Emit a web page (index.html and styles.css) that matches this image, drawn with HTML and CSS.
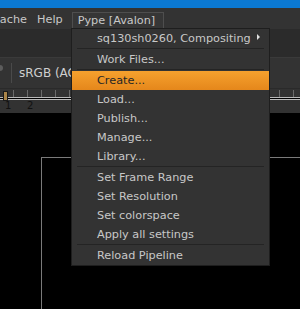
FILE: index.html
```html
<!DOCTYPE html>
<html lang="en">
<head>
  <meta charset="UTF-8">
  <title>Nuke - Pype menu</title>
  <link rel="stylesheet" href="styles.css">
</head>
<body>
<div id="app">
  <div class="titlebar"></div>
  <div class="menubar">
    <span class="menubar-item first">Cache</span>
    <span class="menubar-item">Help</span>
    <span class="menubar-item open">Pype [Avalon]</span>
  </div>
  <div class="panel"></div>
  <div class="toolbar">
    <span class="knob"></span>
    <span class="divider"></span>
    <span class="lut">sRGB (ACES)</span>
  </div>
  <div class="ruler">
    <div class="ticks"><span class="playhead"></span></div>
    <div class="rails"></div>
    <div class="frames"><span>1</span><span>2</span></div>
  </div>
  <div class="viewer">
    <div class="frame"></div>
  </div>

  <div class="menu">
    <div class="menu-item sub">sq130sh0260, Compositing <span class="arrow"></span></div>
    <div class="sep"></div>
    <div class="menu-item">Work Files...</div>
    <div class="sep"></div>
    <div class="menu-item active">Create...</div>
    <div class="menu-item">Load...</div>
    <div class="menu-item">Publish...</div>
    <div class="menu-item">Manage...</div>
    <div class="menu-item">Library...</div>
    <div class="sep"></div>
    <div class="menu-item">Set Frame Range</div>
    <div class="menu-item">Set Resolution</div>
    <div class="menu-item">Set colorspace</div>
    <div class="menu-item">Apply all settings</div>
    <div class="sep"></div>
    <div class="menu-item">Reload Pipeline</div>
  </div>
</div>
</body>
</html>
```

FILE: styles.css
```css
body {
    margin: 0;
    padding: 0;
    background-color: #000;
    font-family: "DejaVu Sans", Verdana, sans-serif;
    font-size: 11.25px;
    color: #c8c8c8;
}

#app {
    position: relative;
    width: 300px;
    height: 309px;
    overflow: hidden;
    display: flex;
    flex-direction: column;
}

#app > div {
    flex-shrink: 0;
}

.titlebar {
    height: 8px;
    background-color: #0b79d3;
}

/* menu bar */
.menubar {
    height: 21px;
    background-color: #333;
    display: flex;
    align-items: flex-end;
    white-space: nowrap;
}

.menubar-item {
    height: 17px;
    line-height: 16px;
    padding: 0 5px;
    box-sizing: border-box;
}

.menubar-item.first {
    margin-left: -13px;
}

.menubar-item.open {
    margin-left: 4px;
    width: 92px;
    border: 1px solid #4e4e4e;
    border-bottom: none;
    background-color: #363636;
}

.panel {
    height: 28px;
    background-color: #2b2b2b;
    border-bottom: 1px solid #3a3a3a;
}

/* viewer toolbar */
.toolbar {
    height: 30px;
    background-color: #333;
    display: flex;
    align-items: center;
    white-space: nowrap;
}

.knob {
    width: 6px;
    height: 6px;
    margin-left: -3px;
    margin-top: -10px;
    border-radius: 50%;
    background-color: #5c5c5c;
}

.divider {
    width: 1px;
    height: 20px;
    margin-left: 8px;
    margin-right: 7px;
    background-color: #4a4a4a;
}

.lut {
    font-size: 12px;
    color: #cfcfcf;
}

/* frame ruler */
.ruler {
    height: 25px;
    background-color: #323232;
    border-top: 1px solid #2a2a2a;
    box-sizing: border-box;
}

.ticks {
    position: relative;
    height: 7px;
    margin-top: 1px;
    background-image: repeating-linear-gradient(to right, transparent 0, transparent 13px, #6a6a6a 13px, #6a6a6a 14px);
}

.playhead {
    position: absolute;
    left: 3px;
    top: 1px;
    width: 3px;
    height: 8px;
    background-color: #a98448;
    border: 1px solid #1a1a1a;
}

.rails {
    height: 1px;
    border-top: 1px solid #b8b8b8;
    border-bottom: 1px solid #b8b8b8;
    background-color: #000;
}

.frames {
    display: flex;
    font-size: 10px;
    line-height: 12px;
    color: #111;
    padding-left: 5px;
}

.frames span:first-child {
    width: 22px;
}

/* viewer */
.viewer {
    flex: 1 1 auto;
    min-height: 0;
    overflow: hidden;
    background-color: #000;
    padding: 44px 0 0 41px;
}

.frame {
    height: 200px;
    border-top: 1px solid #7a7a7a;
    border-left: 1px solid #7a7a7a;
}

/* Pype dropdown */
.menu {
    position: absolute;
    left: 71px;
    top: 28px;
    width: 199px;
    background-color: #333;
    border: 1px solid #1e1e1e;
    box-sizing: border-box;
    white-space: nowrap;
}

.menu-item {
    height: 19px;
    line-height: 19px;
    padding-left: 25px;
    color: #c8c8c8;
}

.menu-item.sub {
    display: flex;
    align-items: center;
}

.arrow {
    margin-left: 6px;
    width: 0;
    height: 0;
    border-left: 3px solid #e0e0e0;
    border-top: 3px solid transparent;
    border-bottom: 3px solid transparent;
    margin-top: -3px;
}

.menu-item.active {
    background: linear-gradient(#f6a12e, #e5871b);
    color: #262626;
}

.sep {
    height: 1px;
    margin: 0 5px 1px 5px;
    background-color: #242424;
}
```
